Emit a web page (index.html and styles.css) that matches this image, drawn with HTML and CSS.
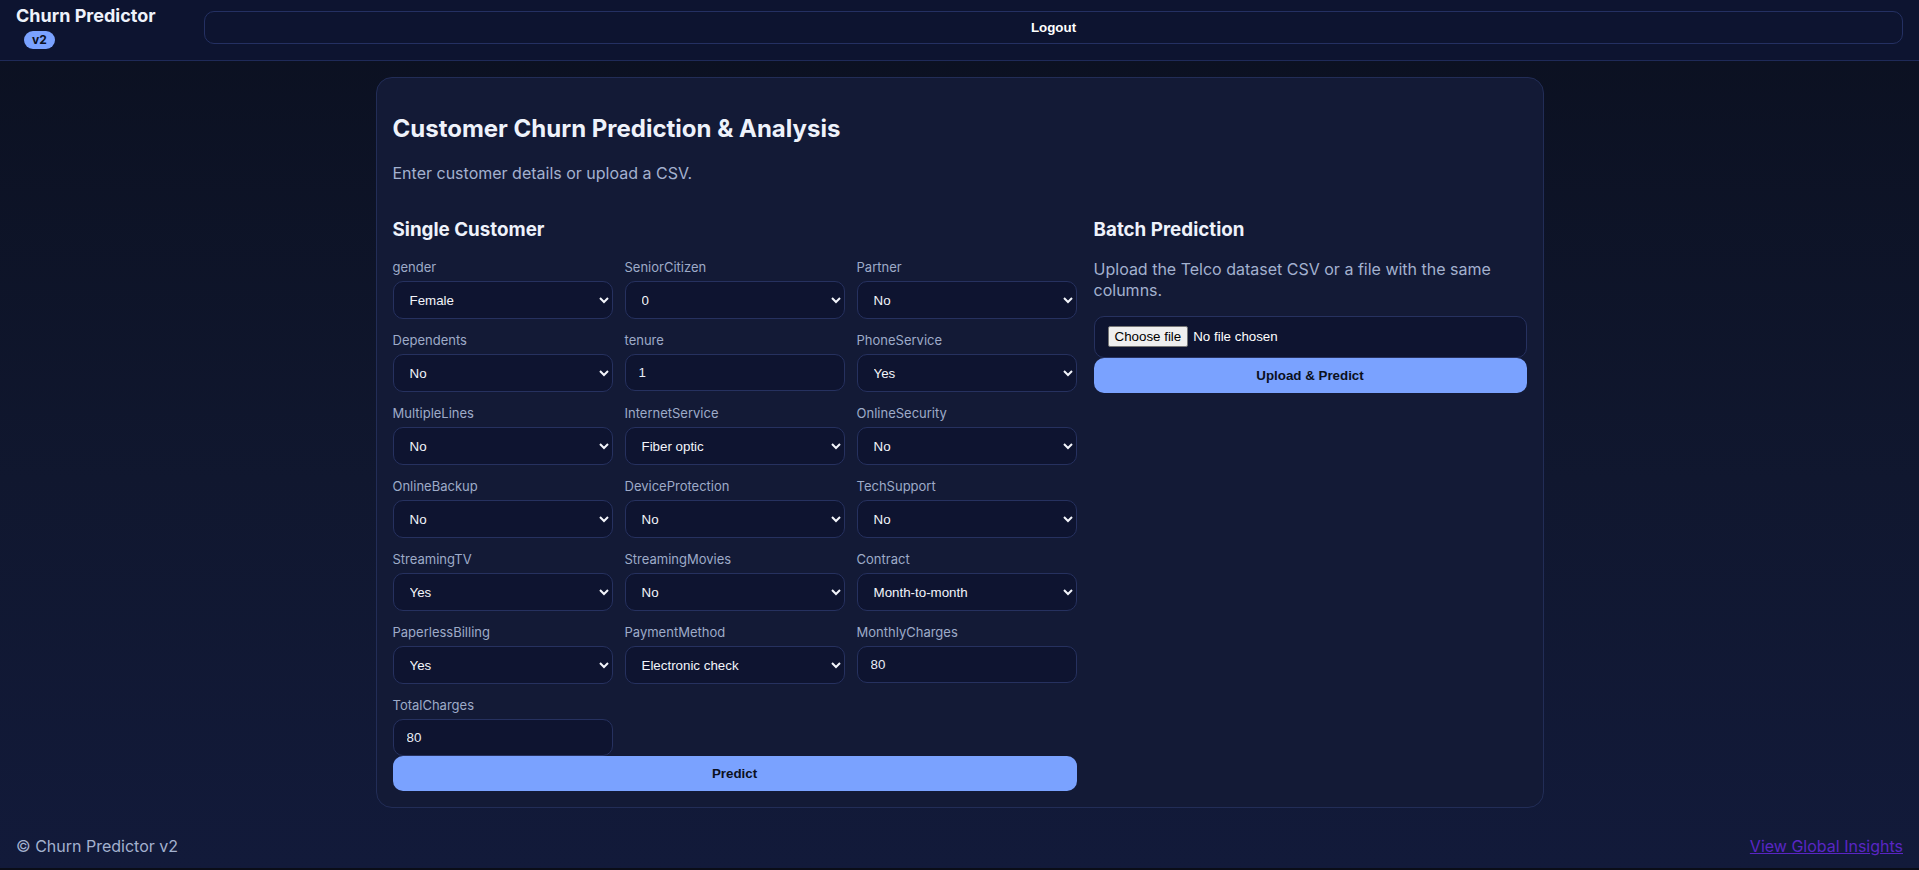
FILE: index.html
```html
<!DOCTYPE html>
<html lang="en">
<head>
<meta charset="utf-8">
<title>Churn Predictor</title>
<link rel="stylesheet" href="styles.css">
</head>
<body>
<header class="topbar">
  <div class="brand">
    <div class="brand-title">Churn Predictor</div>
    <span class="badge">v2</span>
  </div>
  <nav class="nav">
    <button class="btn-ghost" type="button">Logout</button>
  </nav>
</header>

<main class="container">
  <section class="card">
    <h1 class="page-title">Customer Churn Prediction &amp; Analysis</h1>
    <p class="muted lead">Enter customer details or upload a CSV.</p>

    <div class="layout">
      <div class="col-single">
        <h2 class="section-title">Single Customer</h2>
        <form class="fields">
          <div class="field"><label>gender</label><select><option>Female</option><option>Male</option></select></div>
          <div class="field"><label>SeniorCitizen</label><select><option>0</option><option>1</option></select></div>
          <div class="field"><label>Partner</label><select><option>No</option><option>Yes</option></select></div>

          <div class="field"><label>Dependents</label><select><option>No</option><option>Yes</option></select></div>
          <div class="field"><label>tenure</label><input type="number" value="1"></div>
          <div class="field"><label>PhoneService</label><select><option>Yes</option><option>No</option></select></div>

          <div class="field"><label>MultipleLines</label><select><option>No</option><option>Yes</option></select></div>
          <div class="field"><label>InternetService</label><select><option>Fiber optic</option><option>DSL</option><option>No</option></select></div>
          <div class="field"><label>OnlineSecurity</label><select><option>No</option><option>Yes</option></select></div>

          <div class="field"><label>OnlineBackup</label><select><option>No</option><option>Yes</option></select></div>
          <div class="field"><label>DeviceProtection</label><select><option>No</option><option>Yes</option></select></div>
          <div class="field"><label>TechSupport</label><select><option>No</option><option>Yes</option></select></div>

          <div class="field"><label>StreamingTV</label><select><option>Yes</option><option>No</option></select></div>
          <div class="field"><label>StreamingMovies</label><select><option>No</option><option>Yes</option></select></div>
          <div class="field"><label>Contract</label><select><option>Month-to-month</option><option>One year</option><option>Two year</option></select></div>

          <div class="field"><label>PaperlessBilling</label><select><option>Yes</option><option>No</option></select></div>
          <div class="field"><label>PaymentMethod</label><select><option>Electronic check</option><option>Mailed check</option></select></div>
          <div class="field"><label>MonthlyCharges</label><input type="number" value="80"></div>

          <div class="field"><label>TotalCharges</label><input type="number" value="80"></div>
        </form>
        <button class="btn-primary" type="button">Predict</button>
      </div>

      <div class="col-batch">
        <h2 class="section-title">Batch Prediction</h2>
        <p class="muted batch-text">Upload the Telco dataset CSV or a file with the same columns.</p>
        <label class="file-box">
          <input type="file" class="file-hidden">
          <span class="file-btn">Choose file</span>
          <span class="file-name">No file chosen</span>
        </label>
        <button class="btn-primary" type="button">Upload &amp; Predict</button>
      </div>
    </div>
  </section>
</main>

<footer class="footer">
  <span class="muted">© Churn Predictor v2</span>
  <a class="footer-link" href="#insights">View Global Insights</a>
</footer>
</body>
</html>
```

FILE: styles.css
```css
html {
  background: #0a0d18;
}

body {
  margin: 0;
  font-family: Inter, "Noto Sans", sans-serif;
  color: #e6ebf7;
  background: linear-gradient(180deg, #0b1020 0%, #10172f 55%, #121a3a 100%);
  color-scheme: dark;
}

.topbar {
  box-sizing: border-box;
  height: 61px;
  display: flex;
  align-items: flex-start;
  gap: 16px;
  padding: 5px 16px 0;
  background: #0d1430;
  border-bottom: 1px solid #1f2a58;
}

.brand {
  width: 172px;
  flex: none;
  display: flex;
  flex-direction: column;
  align-items: flex-start;
}

.brand-title {
  font-size: 18px;
  font-weight: 700;
  line-height: 22px;
  color: #eef2fb;
}

.badge {
  margin: 4px 0 0 8px;
  padding: 1px 8px;
  border-radius: 999px;
  background: #7aa2ff;
  color: #0b1020;
  font-size: 12px;
  font-weight: 700;
  line-height: 16px;
}

.nav {
  flex: 1;
  display: flex;
  margin-top: 6px;
}

.btn-ghost {
  flex: 1;
  padding: 8px 12px;
  border: 1px solid #243062;
  border-radius: 10px;
  background: transparent;
  color: #ffffff;
  font-family: "Liberation Sans", Arial, sans-serif;
  font-size: 13.33px;
  font-weight: 700;
  line-height: 15px;
}

.container {
  max-width: 1200px;
  margin: 0 auto;
  padding: 16px;
  box-sizing: border-box;
}

.card {
  background: #131a36;
  border: 1px solid #222d57;
  border-radius: 16px;
  padding: 16px;
}

.page-title {
  margin: 20px 0 19px;
  font-size: 24px;
  line-height: 30px;
  font-weight: 700;
  color: #eef2fb;
}

.muted {
  color: #a3b1cf;
}

.lead {
  margin: 19px 0;
  font-size: 16px;
  line-height: 20px;
}

.layout {
  display: grid;
  grid-template-columns: 1.58fr 1fr;
  gap: 17px;
  align-items: start;
}

.section-title {
  margin: 16px 0 18px;
  font-size: 18.8px;
  line-height: 23px;
  font-weight: 700;
  color: #eef2fb;
}

.fields {
  display: grid;
  grid-template-columns: repeat(3, 1fr);
  column-gap: 12px;
  row-gap: 13px;
  margin: 0;
}

.field {
  display: flex;
  flex-direction: column;
  align-items: stretch;
  min-width: 0;
}

.field label {
  font-size: 13px;
  line-height: 16px;
  color: #9eabc8;
  margin-bottom: 6px;
}

.field select,
.field input {
  box-sizing: border-box;
  width: 100%;
  border: 1px solid #26315f;
  border-radius: 10px;
  background: #0e1430;
  color: #f3f5fb;
  font-family: "Liberation Sans", Arial, sans-serif;
  font-size: 13.33px;
  font-weight: 400;
}

.field select {
  height: 38px;
  padding: 0 6px 0 12px;
}

.field input {
  height: 37px;
  padding: 0 13px;
  color: #e8ecf6;
}

.btn-primary {
  display: block;
  width: 100%;
  margin: 0;
  padding: 10px 12px;
  border: none;
  border-radius: 10px;
  background: #7aa2ff;
  color: #0b1020;
  font-family: "Liberation Sans", Arial, sans-serif;
  font-size: 13.33px;
  font-weight: 700;
  line-height: 15px;
}

.batch-text {
  margin: 18px 0 15px;
  font-size: 16px;
  line-height: 20.8px;
}

.file-box {
  box-sizing: border-box;
  height: 42px;
  display: flex;
  align-items: center;
  gap: 5px;
  padding: 0 13px;
  border: 1px solid #26315f;
  border-radius: 10px;
  background: #0e1430;
  font-family: "Liberation Sans", Arial, sans-serif;
  font-size: 13.33px;
}

.file-hidden {
  display: none;
}

.file-btn {
  box-sizing: border-box;
  height: 21px;
  padding: 2px 6px 0;
  border: 1px solid #767676;
  border-radius: 2px;
  background: #efefef;
  color: #000000;
  line-height: 16px;
}

.file-name {
  color: #ffffff;
}

.footer {
  display: flex;
  justify-content: space-between;
  align-items: center;
  padding: 12px 16px;
  font-size: 16px;
}

.footer-link {
  color: #5a26c4;
}
```
